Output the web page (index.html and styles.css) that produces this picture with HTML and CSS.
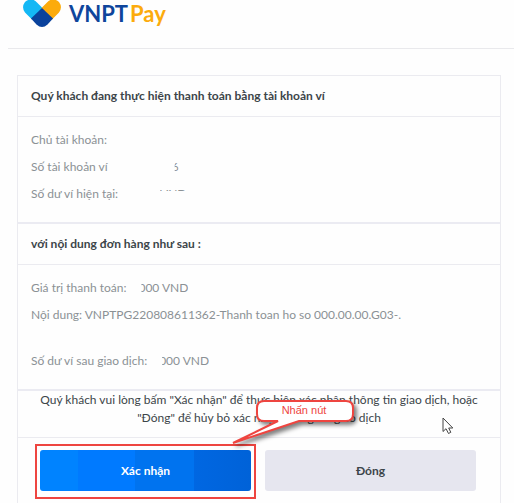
FILE: index.html
```
<!DOCTYPE html>
<html lang="vi">
  <head>
    <meta charset="UTF-8" />
    <meta name="viewport" content="width=device-width, initial-scale=1.0" />
    <title>VNPT Pay</title>
    <link rel="stylesheet" href="styles.css">
  </head>
  <body>
    <header class="header">
      <svg class="logo" viewBox="0 0 40 28" aria-hidden="true">
        <path d="M10 19.500L3 12.500A8.800 8.800 0 0 1 3 2Q9.500 -3.500 15 2.500L21 8.500Z" fill="#14b8f5" />
        <path d="M30 19.500L37 12.500A8.800 8.800 0 0 0 37 2Q30.500 -3.500 25 2.500L19 8.500Z" fill="#fcab0c" />
        <path d="M20 8L9 18.500L14.500 24.500Q20 29.500 25.500 24.500L31 18.500Z" fill="#0a429c" />
      </svg>
      <div class="brand">VNPT<span class="brand-pay">Pay</span></div>
    </header>

    <main class="card">
      <h2 class="card-title">Quý khách đang thực hiện thanh toán bằng tài khoản ví</h2>
      <div class="details">
        <p class="row">Chủ tài khoản:</p>
        <p class="row row-account">Số tài khoản ví <span class="cut-left">6</span></p>
        <p class="row row-balance">Số dư ví hiện tại: <span class="cut-bottom">VND</span></p>
      </div>

      <h2 class="card-title">với nội dung đơn hàng như sau :</h2>
      <div class="details">
        <p class="row row-amount">Giá trị thanh toán: <span class="cut-left">000 VND</span></p>
        <p class="row row-content">Nội dung: VNPTPG220808611362-Thanh toan ho so 000.00.00.G03-.</p>
        <p class="row row-amount">Số dư ví sau giao dịch: <span class="cut-left">000 VND</span></p>
      </div>

      <div class="note">
        <p>Quý khách vui lòng bấm "Xác nhận" để thực hiện xác nhận thông tin giao dịch, hoặc "Đóng" để hủy bỏ xác nhận thông tin giao dịch</p>
        <div class="callout">
          <svg class="callout-shape" viewBox="0 0 130 52" aria-hidden="true">
            <path d="M34 4H116Q123 4 123 11V17Q123 24 116 24H69L3 46L48 24H34Q27 24 27 17V11Q27 4 34 4Z" />
          </svg>
          <span class="callout-text">Nhấn nút</span>
        </div>
        <svg class="cursor" viewBox="0 0 12 18" aria-hidden="true">
          <path d="M1 1V14.500L4 11.700L6.500 16.500L8.800 15.300L6.700 11H10.800Z" />
        </svg>
      </div>

      <div class="actions">
        <button class="btn btn-primary" type="button">Xác nhận</button>
        <button class="btn btn-secondary" type="button">Đóng</button>
      </div>
    </main>
  </body>
</html>
```

FILE: styles.css
```
* {
  margin: 0;
  padding: 0;
  box-sizing: border-box;
}

body {
  font-family: Lato, "Open Sans", sans-serif;
  font-size: 12px;
  color: #3c4549;
  background: #fefefe;
  min-height: 100vh;
  display: flex;
  flex-direction: column;
  overflow: hidden;
}

.header {
  display: flex;
  align-items: flex-start;
  gap: 7px;
  height: 49px;
  margin-left: 8px;
  padding-left: 14px;
  border-bottom: 1px solid #e9e9ec;
}

.logo {
  width: 40px;
  height: 28px;
}

.brand {
  font-size: 22px;
  line-height: 28px;
  font-weight: 700;
  color: #0e459c;
}

.brand-pay {
  margin-left: 2px;
  color: #fcab0c;
}

.card {
  flex: 1;
  margin: 26px 13px 0 17px;
  border: 1px solid #ebebf0;
  border-bottom: 0;
}

.card-title {
  padding: 0 13px;
  font-size: 12px;
  line-height: 40px;
  font-weight: 700;
  border-bottom: 1px solid #ebebf0;
}

.details {
  padding: 9px 13px 15px;
  color: #8b9195;
  border-bottom: 2px solid #ebebf2;
}

.row {
  display: flex;
  line-height: 27px;
}

.row-account {
  gap: 64px;
}

.row-balance {
  gap: 42px;
}

.row-amount {
  gap: 12px;
}

.row-content {
  padding-bottom: 19px;
}

.cut-left {
  clip-path: inset(0 0 0 3px);
}

.cut-bottom {
  clip-path: inset(0 0 16px 0);
}

.note {
  position: relative;
  padding: 0 16px 10px;
  line-height: 18px;
  text-align: center;
  border-bottom: 1px solid #ebebf0;
}

.callout {
  position: absolute;
  top: 6px;
  left: 212px;
  width: 130px;
  height: 52px;
  z-index: 1;
}

.callout-shape {
  width: 130px;
  height: 52px;
  overflow: visible;
  fill: #fff;
  stroke: #ee4540;
  stroke-width: 2;
  filter: drop-shadow(3px 3px 2px rgba(0, 0, 0, 0.5));
}

.callout-text {
  position: absolute;
  top: 4px;
  left: 26px;
  width: 96px;
  font-family: "Liberation Sans", sans-serif;
  font-size: 11px;
  color: #ee4540;
}

.cursor {
  position: absolute;
  top: 26px;
  right: 46px;
  width: 12px;
  height: 18px;
  fill: #fff;
  stroke: #444;
}

.actions {
  display: flex;
  gap: 14px;
  padding: 12px 24px 12px 22px;
}

.btn {
  flex: 1;
  height: 41px;
  border: 0;
  border-radius: 3px;
  font-family: inherit;
  font-size: 12px;
  font-weight: 700;
}

.btn-primary {
  position: relative;
  color: #fff;
  background: linear-gradient(90deg, #0083ff 18%, #007aff 18% 45%, #0073ef 45% 73%, #0067e2 73%, #0062d8);
}

/* highlight frame around the confirm button */
.btn-primary::after {
  content: "";
  position: absolute;
  inset: -6px -5px -8px;
  border: 2px solid #ee4540;
}

.btn-secondary {
  color: #3c4549;
  background: #e6e6ef;
}
```
